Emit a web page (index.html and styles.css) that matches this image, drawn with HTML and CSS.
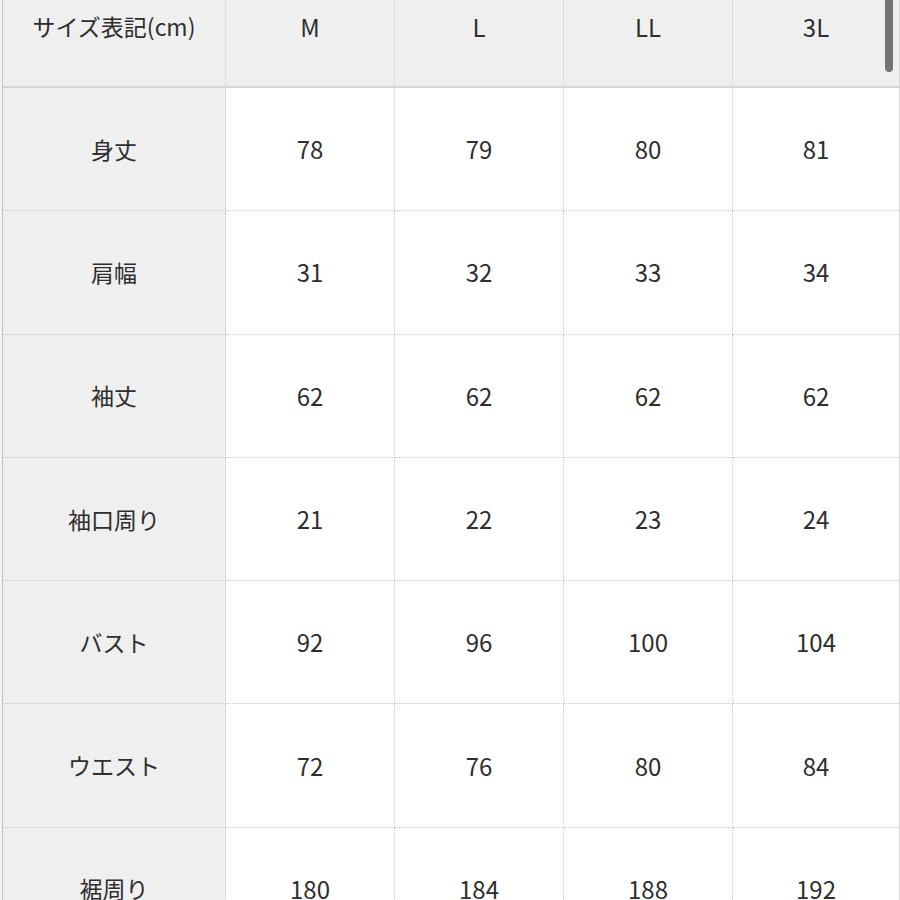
FILE: index.html
```html
<!DOCTYPE html>
<html lang="ja">
<head>
<meta charset="utf-8">
<title>サイズ表</title>
<link rel="stylesheet" href="styles.css">
</head>
<body>
<div class="frame">
  <div class="grid">
    <div class="cell head first">サイズ表記(cm)</div>
    <div class="cell head">M</div>
    <div class="cell head">L</div>
    <div class="cell head">LL</div>
    <div class="cell head last">3L</div>

    <div class="cell first">身丈</div>
    <div class="cell">78</div><div class="cell">79</div><div class="cell">80</div><div class="cell last">81</div>

    <div class="cell first">肩幅</div>
    <div class="cell">31</div><div class="cell">32</div><div class="cell">33</div><div class="cell last">34</div>

    <div class="cell first">袖丈</div>
    <div class="cell">62</div><div class="cell">62</div><div class="cell">62</div><div class="cell last">62</div>

    <div class="cell first">袖口周り</div>
    <div class="cell">21</div><div class="cell">22</div><div class="cell">23</div><div class="cell last">24</div>

    <div class="cell first">バスト</div>
    <div class="cell">92</div><div class="cell">96</div><div class="cell">100</div><div class="cell last">104</div>

    <div class="cell first">ウエスト</div>
    <div class="cell">72</div><div class="cell">76</div><div class="cell">80</div><div class="cell last">84</div>

    <div class="cell first">裾周り</div>
    <div class="cell">180</div><div class="cell">184</div><div class="cell">188</div><div class="cell last">192</div>
  </div>
  <div class="scrollbar"></div>
</div>
</body>
</html>
```
FILE: styles.css
```css
html, body {
  margin: 0;
  padding: 0;
  background: #f3f3f3;
}
.frame {
  position: relative;
  width: 900px;
  height: 900px;
  overflow: hidden;
  background: #f3f3f3;
}
.grid {
  display: grid;
  grid-template-columns: 223px 169px 169px 169px 166px;
  grid-template-rows: 123px repeat(7, 123.3px);
  margin-top: -35px;
  margin-left: 2px;
  border-left: 1px solid #c4c4c4;
  width: 896px;
  border-right: 1px solid #d8d8d8;
  font-family: "Noto Sans CJK JP", "Noto Sans", sans-serif;
  font-size: 23px;
  color: #2e2e2e;
}
.cell {
  display: flex;
  align-items: center;
  justify-content: center;
  background: #ffffff;
  border-right: 1px dotted #c8c8c8;
  border-bottom: 1px dotted #c8c8c8;
  box-sizing: border-box;
  font-size: 24px;
  padding-bottom: 1px;
}
.cell.first {
  font-size: 23px;
}
.cell.last {
  border-right: none;
}
.cell.first {
  background: #efefef;
}
.cell.head {
  background: #efefef;
  border-bottom: 2px solid #d4d4d4;
  padding-bottom: 0;
  padding-top: 1px;
}
.scrollbar {
  position: absolute;
  top: -6px;
  left: 885px;
  width: 8px;
  height: 78px;
  border-radius: 4px;
  background: #747474;
}
```
